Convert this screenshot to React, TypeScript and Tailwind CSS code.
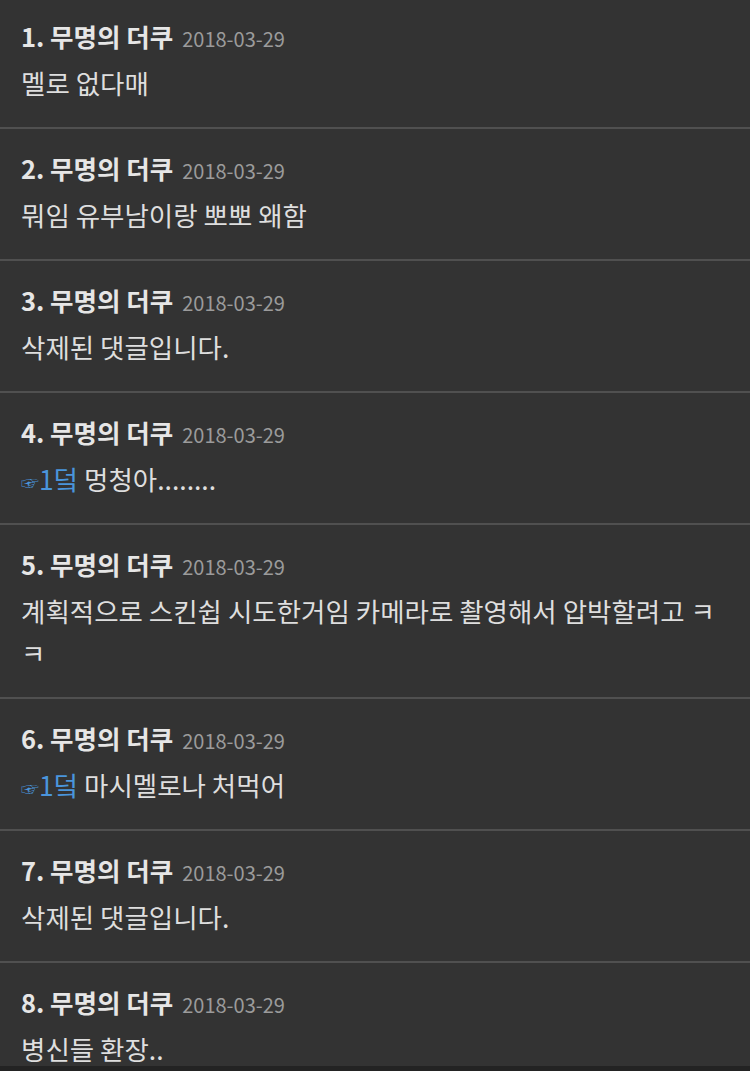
const COMMENTS: { date: string; text: string; reply?: string }[] = [
  { date: "2018-03-29", text: "멜로 없다매" },
  { date: "2018-03-29", text: "뭐임 유부남이랑 뽀뽀 왜함" },
  { date: "2018-03-29", text: "삭제된 댓글입니다." },
  { date: "2018-03-29", reply: "☞1덬", text: "멍청아........" },
  { date: "2018-03-29", text: "계획적으로 스킨쉽 시도한거임 카메라로 촬영해서 압박할려고 ㅋㅋ" },
  { date: "2018-03-29", reply: "☞1덬", text: "마시멜로나 처먹어" },
  { date: "2018-03-29", text: "삭제된 댓글입니다." },
  { date: "2018-03-29", text: "병신들 환장.." },
];

function Comment({ n, date, text, reply }: { n: number; date: string; text: string; reply?: string }) {
  return (
    <div className="border-b-2 border-[#505050] px-[21px] pt-[21px] pb-[23px]">
      <div className="flex items-baseline gap-[9px] h-9 leading-9">
        <span className="text-[25.5px] font-bold text-[#e6e6e6]">
          {n}. 무명의 더쿠
        </span>
        <span className="text-[20px] text-[#9b9b9b]">{date}</span>
      </div>
      <p className="mt-2 h-auto text-[26.5px] leading-[42px] text-[#dedede]">
        {reply && (
          <span className="text-[#4a95dc]">
            <span className="text-[18px] leading-none">☞</span>1덬{" "}
          </span>
        )}
        {text}
      </p>
    </div>
  );
}

export default function App() {
  return (
    <div
      className="flex h-[1071px] flex-col bg-[#333333]"
      style={{ fontFamily: '"Noto Sans CJK KR", "Noto Sans", sans-serif' }}
    >
      <div className="flex-1 overflow-hidden">
        <div className="-mt-[3px]">
          {COMMENTS.map((c, i) => (
            <Comment key={i} n={i + 1} date={c.date} text={c.text} reply={c.reply} />
          ))}
        </div>
      </div>
      <div className="h-[5px] bg-[#232323]" />
    </div>
  );
}
